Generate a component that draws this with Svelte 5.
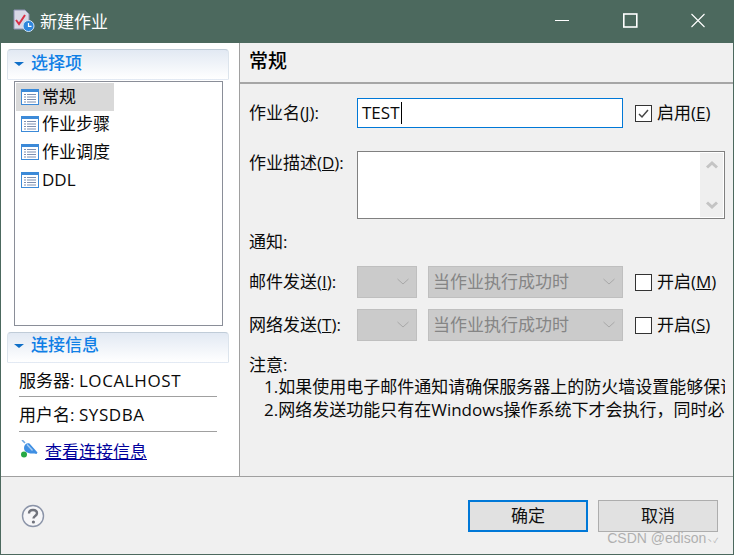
<script>
  const items = ['常规', '作业步骤', '作业调度', 'DDL'];
  const notifyRows = [
    { label: '邮件发送', key: 'I', check: 'M' },
    { label: '网络发送', key: 'T', check: 'S' }
  ];
</script>

<div class="window">
  <header class="titlebar">
    <svg class="app-icon" width="22" height="24" viewBox="0 0 22 24">
      <path d="M1 1h11l4 4v15H1z" fill="#d8d8e6" stroke="#8f93b5"/>
      <path d="M3 11l3 4 6-9" fill="none" stroke="#d92f45" stroke-width="2"/>
      <circle cx="15.5" cy="17" r="5.5" fill="#2f86dc" stroke="#cfe4f7"/>
      <path d="M15.5 14v3.4h3" fill="none" stroke="#fff" stroke-width="1.2"/>
    </svg>
    <span class="title">新建作业</span>
    <div class="controls">
      <svg width="16" height="16" viewBox="0 0 16 16"><path d="M1 8.500h14" stroke="#fff"/></svg>
      <svg width="16" height="16" viewBox="0 0 16 16"><rect x="1.800" y="1" width="13" height="13" fill="none" stroke="#fff" stroke-width="1.600"/></svg>
      <svg width="16" height="16" viewBox="0 0 16 16"><path d="M1.500 1l13 13M14.500 1l-13 13" stroke="#fff" stroke-width="1.100"/></svg>
    </div>
  </header>

  <div class="body">
    <aside class="side">
      <div class="sec-head"><i class="tri"></i>选择项</div>
      <ul class="list">
        {#each items as item, i}
          <li class:sel={i === 0}>
            <svg width="18" height="16" viewBox="0 0 18 16">
              <rect x=".5" y=".5" width="17" height="15" fill="#fff" stroke="#3c8ad8"/>
              <rect x="0" y="0" width="18" height="3" fill="#3c8ad8"/>
              <path d="M3 5.500h2M6 5.500h9M3 8h2M6 8h9M3 10.500h2M6 10.500h9M3 13h2M6 13h9" stroke="#7d8fb0"/>
            </svg>
            <span>{item}</span>
          </li>
        {/each}
      </ul>
      <div class="sec-head second"><i class="tri"></i>连接信息</div>
      <div class="info"><span>服务器: <span class="spaced">LOCALHOST</span></span></div>
      <div class="info"><span>用户名: <span class="spaced">SYSDBA</span></span></div>
      <div class="link-row">
        <svg width="20" height="20" viewBox="0 0 20 20">
          <path d="M2 0l3 3" stroke="#6fa8e2" stroke-width="1.600"/>
          <path d="M4 8C4 4.500 7 2.500 9.500 3.500l8 9-1 1.500c-3-1-5.500 0-8-1C6 12 4 11 4 8z" fill="#3f8fe3"/>
          <path d="M7 4.500l5.500 6" stroke="#a9cdf2" stroke-width="1.400"/>
          <circle cx="4" cy="14.500" r="3" fill="#27a844"/>
        </svg>
        <a href="#info">查看连接信息</a>
      </div>
    </aside>

    <main class="main">
      <h1>常规</h1>
      <div class="form">
        <div class="row name-row">
          <span class="label">作业名(<u>J</u>):</span>
          <div class="input"><span>TEST</span><i class="caret"></i></div>
          <span class="check-box checked">
            <svg width="15" height="15" viewBox="0 0 15 15"><path d="M3 8l3 3 6-7" fill="none" stroke="#444" stroke-width="1.500"/></svg>
          </span>
          <span class="check-label">启用(<u>E</u>)</span>
        </div>

        <div class="row desc-row">
          <span class="label">作业描述(<u>D</u>):</span>
          <div class="textarea">
            <div class="scroll">
              <svg width="14" height="10" viewBox="0 0 14 10"><path d="M2 7.500l5-4.500 5 4.500" fill="none" stroke="#c4c4c4" stroke-width="3"/></svg>
              <svg width="14" height="10" viewBox="0 0 14 10"><path d="M2 2.500l5 4.500 5-4.500" fill="none" stroke="#c4c4c4" stroke-width="3"/></svg>
            </div>
          </div>
        </div>

        <div class="notify">通知:</div>

        {#each notifyRows as r}
          <div class="row select-row">
            <span class="label">{r.label}(<u>{r.key}</u>):</span>
            <div class="select small">
              <svg width="14" height="8" viewBox="0 0 14 8"><path d="M1.500 1l5.500 5 5.500-5" fill="none" stroke="#a8a8a8"/></svg>
            </div>
            <div class="select wide">
              <span>当作业执行成功时</span>
              <svg width="14" height="8" viewBox="0 0 14 8"><path d="M1.500 1l5.500 5 5.500-5" fill="none" stroke="#a8a8a8"/></svg>
            </div>
            <span class="check-box"></span>
            <span class="check-label">开启(<u>{r.check}</u>)</span>
          </div>
        {/each}

        <div class="note-title">注意:</div>
        <div class="note">1.如果使用电子邮件通知请确保服务器上的防火墙设置能够保证邮件正常发送</div>
        <div class="note">2.网络发送功能只有在Windows操作系统下才会执行，同时必须开启相关服务</div>
      </div>
    </main>
  </div>

  <footer class="footer">
    <svg class="help" width="24" height="25" viewBox="0 0 24 25">
      <circle cx="12" cy="12" r="10.500" fill="#f6f6f8" stroke="#8b94a8" stroke-width="1.400"/>
      <path d="M8 9.500C8 7 10 6 12 6c2.500 0 4 1.400 4 3.300 0 2.700-3.500 2.700-3.500 5.200" fill="none" stroke="#70737c" stroke-width="2.400"/>
      <circle cx="12.400" cy="18" r="1.600" fill="#70737c"/>
    </svg>
    <button class="btn primary">确定</button>
    <button class="btn">取消</button>
    <span class="mark">CSDN @edison<small>丶✓</small></span>
  </footer>
</div>

<style>
  :global(body) { margin: 0; }
  .window {
    width: 734px; height: 555px; box-sizing: border-box;
    border: 1px solid #4c695e; border-top: 0;
    display: flex; flex-direction: column; overflow: hidden; position: relative;
    background: #f0f0f0; color: #0a0a0a;
    font: 17px/22px "Open Sans", "Noto Sans CJK SC", sans-serif;
  }
  .titlebar {
    height: 43px; flex: none; background: #4c695e; color: #fff;
    display: flex; align-items: center; margin: 0 -1px; padding-left: 13px;
  }
  .app-icon { margin-right: 5px; margin-top: -1px; }
  .controls { margin-left: auto; display: flex; gap: 52px; margin-right: 28px; margin-top: -1px; }
  .controls svg:first-child { margin-top: -1px; }

  .body { height: 433px; flex: none; display: flex; border-bottom: 1px solid #a0a0a0; }

  .side {
    flex: none; background: #fff; border-right: 1px solid #a0a0a0;
    padding: 6px 0 0 6px; width: 232px;
  }
  .sec-head {
    width: 222px; height: 31px; box-sizing: border-box;
    border: 1px solid; border-color: #c0ccd8 #dce4ec transparent; border-radius: 4px 4px 0 0;
    background: linear-gradient(#e2e9f3, #fff);
    color: #0f7fe6; font-weight: 500; padding: 0 0 3px 6px;
    display: flex; align-items: center;
  }
  .tri {
    width: 0; height: 0; margin-right: 7px; margin-top: 1px;
    border: 5px solid transparent; border-top: 4px solid #0f6fc8; border-bottom: 0;
  }
  .list {
    list-style: none; margin: 1px 0 0 7px; padding: 1px;
    width: 209px; height: 245px; box-sizing: border-box;
    border: 1px solid #8a8e98; display: flex; flex-direction: column;
  }
  .list li {
    height: 27.670px; width: 98px; display: flex; align-items: center; padding-left: 5px;
    box-sizing: border-box; gap: 3px; white-space: nowrap; flex: none;
  }
  .list li.sel { background: #d9d9d9; }
  .second { margin-top: 6px; padding-bottom: 5px; }
  .info {
    margin-left: 12px; width: 198px; height: 35px; box-sizing: border-box; padding-top: 2px;
    border-bottom: 1px solid #a0a0a0; display: flex; align-items: center;
  }
  .second + .info { height: 34px; }
  .spaced { letter-spacing: .6px; }
  .link-row { margin: 9px 0 0 13px; display: flex; align-items: center; gap: 5px; }
  .link-row svg { margin-top: -4px; }
  .link-row a { color: #00009c; text-decoration: underline; }

  .main { flex: 1; min-width: 0; }
  h1 {
    margin: 0; height: 41px; box-sizing: border-box; border-bottom: 2px solid #a6a6a6;
    font: 500 19px/36px "Open Sans", "Noto Sans CJK SC", sans-serif; padding-left: 9px; color: #000;
  }
  .form { padding: 14px 8px 0 9px; width: 485px; box-sizing: border-box; overflow: hidden; }
  .row { display: flex; align-items: center; }
  .label { width: 108px; flex: none; white-space: nowrap; }
  .name-row { height: 30px; }
  .input {
    width: 266px; height: 30px; flex: none; box-sizing: border-box;
    border: 1px solid #0078d7; background: #fff; display: flex; align-items: center; padding-left: 4px;
  }
  .caret { width: 1px; height: 22px; background: #000; margin-left: 1px; }
  .check-box {
    width: 17px; height: 17px; box-sizing: border-box; flex: none; margin-left: 12px;
    border: 1px solid #333; background: #fff; display: flex; align-items: center; justify-content: center;
  }
  .check-label { margin-left: 5px; white-space: nowrap; }
  .desc-row { margin-top: 23px; align-items: flex-start; }
  .desc-row .label { line-height: 24px; }
  .textarea {
    width: 368px; height: 68px; box-sizing: border-box; flex: none;
    border: 1px solid #808080; background: #fff; padding: 1px; display: flex; justify-content: flex-end;
  }
  .scroll {
    width: 23px; background: #efefef; display: flex; flex-direction: column;
    justify-content: space-between; align-items: center; padding: 7px 0 7px; box-sizing: border-box;
  }
  .notify { margin-top: 12px; height: 22px; }
  .select-row { height: 32px; margin-top: 11px; }
  .notify + .select-row { margin-top: 13px; }
  .select {
    height: 32px; box-sizing: border-box; flex: none;
    background: #cbcbcb; border: 1px solid #bfbfbf; color: #858585;
    display: flex; align-items: center; justify-content: space-between; padding: 0 6px 0 4px;
  }
  .select.small { width: 60px; justify-content: flex-end; }
  .select.wide { width: 195px; margin-left: 11px; }
  .note-title { margin-top: 13px; height: 22px; }
  .note { padding-left: 15px; white-space: nowrap; overflow: hidden; width: 476px; box-sizing: border-box; }
  .note + .note { margin-top: 1px; }

  .footer { flex: 1; display: flex; align-items: flex-start; padding: 23px 15px 0 20px; position: relative; }
  .help { margin-top: 4px; margin-right: auto; }
  .btn {
    width: 120px; height: 32px; box-sizing: border-box; background: #e1e1e1;
    border: 1px solid #adadad; padding: 0; color: #111;
    font: inherit; margin-left: 10px;
  }
  .btn.primary { border: 2px solid #0078d7; }
  .mark {
    position: absolute; right: 15px; bottom: 5px; color: #b0b0b0;
    font: 14px/16px "Liberation Sans", "Noto Sans CJK SC", sans-serif;
  }
  .mark small { font-size: 7px; }
</style>
